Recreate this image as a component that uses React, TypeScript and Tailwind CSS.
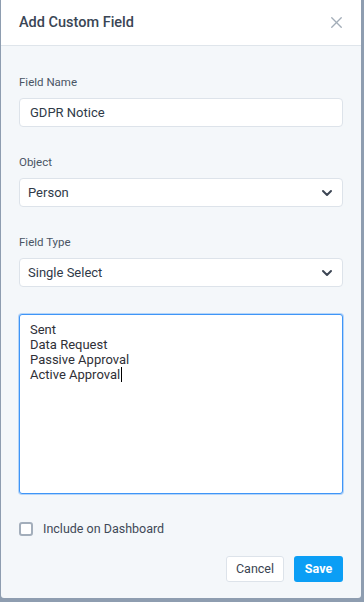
import { ChevronDown, X } from "lucide-react";

const font = { fontFamily: "Roboto, 'Noto Sans', sans-serif" };

function Label({ children }: { children: React.ReactNode }) {
  return <div className="text-[11.5px] leading-4 text-[#4a5565] mb-2">{children}</div>;
}

function SelectBox({ value }: { value: string }) {
  return (
    <div className="flex items-center justify-between h-[29px] rounded-[4px] border border-[#dde3ea] bg-white pl-[8px] pr-[7px]">
      <span className="text-[13px] text-[#2f3a48]">{value}</span>
      <ChevronDown className="w-[16px] h-[16px] text-[#3d4654]" strokeWidth={3} />
    </div>
  );
}

export default function App() {
  const options = ["Sent", "Data Request", "Passive Approval", "Active Approval"];

  return (
    <div className="w-[364px] h-[602px] bg-[#8e9db0] pl-px pr-[3px] pb-[4px]" style={font}>
      <div className="h-full flex flex-col bg-[#f4f7fa] rounded-b-[3px] overflow-hidden">
        <div className="h-[46px] shrink-0 bg-white border-b border-[#dfe5eb] flex items-center justify-between pl-[18px] pr-[15px]">
          <h2 className="text-[14.5px] font-medium text-[#3a4655] pt-px">Add Custom Field</h2>
          <X className="w-[19px] h-[19px] text-[#a3adb8]" strokeWidth={1.7} />
        </div>

        <div className="flex-1 flex flex-col px-[18px] pt-[28px]">
          <Label>Field Name</Label>
          <div className="flex items-center h-[29px] rounded-[4px] border border-[#dde3ea] bg-white px-[10px]">
            <span className="text-[13px] text-[#2f3a48]">GDPR Notice</span>
          </div>

          <div className="mt-[27px]">
            <Label>Object</Label>
            <SelectBox value="Person" />
          </div>

          <div className="mt-[27px]">
            <Label>Field Type</Label>
            <SelectBox value="Single Select" />
          </div>

          <div className="mt-[27px] h-[180px] rounded-[3px] border border-[#3f95f7] bg-white px-[10px] pt-[7px] shadow-[0_0_0_1px_rgba(63,149,247,0.35)]">
            {options.map((o, i) => (
              <div key={o} className="text-[13px] leading-[15px] text-[#2f3037] flex items-center">
                {o}
                {i === options.length - 1 && <span className="inline-block w-px h-[15px] bg-black ml-px" />}
              </div>
            ))}
          </div>

          <label className="mt-[27px] flex items-center gap-[10px] h-4">
            <span className="w-[14px] h-[14px] rounded-[3px] border-2 border-[#a3aebb] bg-white" />
            <span className="text-[12.5px] leading-4 text-[#3f4957]">Include on Dashboard</span>
          </label>

          <div className="mt-[19px] flex justify-end gap-[10px]">
            <button className="h-[26px] w-[58px] rounded-[3px] border border-[#dde3ea] bg-white text-[12.5px] text-[#3a4452]">
              Cancel
            </button>
            <button className="h-[26px] w-[49px] rounded-[3px] bg-[#0b9ef5] text-[12.5px] font-bold text-white">
              Save
            </button>
          </div>
        </div>
      </div>
    </div>
  );
}
